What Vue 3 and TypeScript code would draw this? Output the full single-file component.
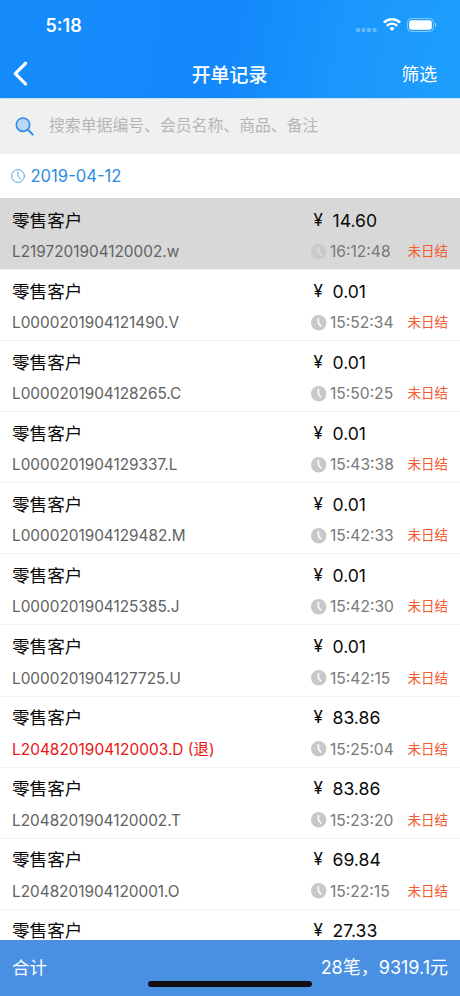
<script setup lang="ts">
interface Order {
  code?: string
  amount: string
  time?: string
  refunded?: boolean
  selected?: boolean
}

const orders: Order[] = [
  { code: 'L2197201904120002.w', amount: '14.60', time: '16:12:48', selected: true },
  { code: 'L0000201904121490.V', amount: '0.01', time: '15:52:34' },
  { code: 'L0000201904128265.C', amount: '0.01', time: '15:50:25' },
  { code: 'L0000201904129337.L', amount: '0.01', time: '15:43:38' },
  { code: 'L0000201904129482.M', amount: '0.01', time: '15:42:33' },
  { code: 'L0000201904125385.J', amount: '0.01', time: '15:42:30' },
  { code: 'L0000201904127725.U', amount: '0.01', time: '15:42:15' },
  { code: 'L2048201904120003.D (退)', amount: '83.86', time: '15:25:04', refunded: true },
  { code: 'L2048201904120002.T', amount: '83.86', time: '15:23:20' },
  { code: 'L2048201904120001.O', amount: '69.84', time: '15:22:15' },
  { amount: '27.33' },
]
</script>

<template>
  <div class="screen">
    <header class="header">
      <div class="status">
        <span class="clock">5:18</span>
        <div class="signals">
          <svg class="dots" width="21" height="4" viewBox="0 0 21 4">
            <rect v-for="n in 4" :key="n" :x="(n - 1) * 5.5" y="0" width="4" height="4" rx="1" fill="#fff" opacity=".32" />
          </svg>
          <svg class="wifi" width="18" height="13" viewBox="0 0 18 13" fill="none" stroke="#fff">
            <path d="M.9 4.6A11.5 11.5 0 0 1 17.1 4.6" stroke-width="2.5" />
            <path d="M3.8 7.9A7.2 7.2 0 0 1 14.2 7.9" stroke-width="2.3" />
            <path d="M6.4 10.2A3.8 3.8 0 0 1 11.6 10.2L9 12.9Z" fill="#fff" stroke="none" />
          </svg>
          <svg class="battery" width="30" height="14" viewBox="0 0 30 14">
            <rect x=".5" y=".5" width="26" height="13" rx="4" fill="none" stroke="#fff" stroke-opacity=".45" />
            <rect x="2.2" y="2.2" width="22.6" height="9.6" rx="2.4" fill="#fff" />
            <path d="M28 4.8C29.8 5.4 29.8 8.6 28 9.2Z" fill="#fff" opacity=".5" />
          </svg>
        </div>
      </div>
      <nav class="nav">
        <svg class="back" width="18" height="26" viewBox="0 0 18 26" fill="none" stroke="#fff" stroke-width="3.2" stroke-linecap="round" stroke-linejoin="round">
          <path d="M13.5 3.3L3.3 13.6L13.5 23.9" />
        </svg>
        <span class="title">开单记录</span>
        <span class="filter">筛选</span>
      </nav>
    </header>

    <div class="search">
      <svg width="19" height="19" viewBox="0 0 19 19" stroke="#2f8ee8" stroke-width="1.6" stroke-linecap="round">
        <circle cx="8" cy="7.7" r="6.7" fill="#b9d8f3" />
        <path d="M12.9 12.7L17.7 17.5" fill="none" stroke-width="2" />
      </svg>
      <span class="placeholder">搜索单据编号、会员名称、商品、备注</span>
    </div>

    <div class="date">
      <svg width="14" height="14" viewBox="0 0 14 14" fill="none" stroke="#55a5e6" stroke-linecap="round">
        <circle cx="7" cy="7" r="6.4" />
        <path d="M7 3V7.4L9.6 10.3" />
      </svg>
      <span class="day">2019-04-12</span>
    </div>

    <main class="list">
      <article v-for="(order, i) in orders" :key="i" class="row" :class="{ selected: order.selected, refunded: order.refunded }">
        <div class="left">
          <span class="name">零售客户</span>
          <span v-if="order.code" class="code">{{ order.code }}</span>
        </div>
        <div class="right">
          <div class="amount"><span class="yen">¥</span><span class="sum">{{ order.amount }}</span></div>
          <div v-if="order.time" class="meta">
            <svg width="16" height="16" viewBox="0 0 16 16">
              <circle class="dial" cx="7.7" cy="7.7" r="7.7" />
              <path class="hands" d="M7.4 3.5V8L9.8 11" fill="none" stroke-width="1.6" stroke-linecap="round" />
            </svg>
            <span class="time">{{ order.time }}</span>
            <span class="state">未日结</span>
          </div>
        </div>
      </article>
    </main>

    <footer class="footer">
      <span>合计</span>
      <span class="total">28笔，9319.1元</span>
      <i class="home"></i>
    </footer>
  </div>
</template>

<style>
body {
  margin: 0;
}
</style>

<style scoped>
.screen {
  width: 460px;
  height: 996px;
  display: flex;
  flex-direction: column;
  overflow: hidden;
  background: #fff;
  font-family: Inter, "Noto Sans CJK SC", sans-serif;
  white-space: nowrap;
}
.header {
  flex: none;
  height: 98px;
  box-sizing: border-box;
  background: linear-gradient(100deg, #168bfb 0%, #1388fb 50%, #1a96fc 73%, #1e9ffc 100%);
  color: #fff;
}
.status {
  height: 50px;
  display: flex;
  justify-content: space-between;
  padding: 0 23.5px 0 45.5px;
}
.clock {
  font-size: 18px;
  font-weight: 600;
  line-height: 52px;
}
.signals {
  display: flex;
  align-items: flex-start;
  padding-top: 18px;
}
.dots {
  margin: 10px 6px 0 0;
}
.wifi {
  margin-right: 6px;
}
.nav {
  height: 46px;
  display: grid;
  grid-template-columns: 1fr auto 1fr;
  align-items: center;
  padding: 0 23px 0 12px;
  box-sizing: border-box;
}
.title {
  font-size: 18.9px;
  font-weight: 500;
  margin-left: 10px;
}
.filter {
  font-size: 17.8px;
  text-align: right;
}
.search {
  flex: none;
  height: 55.5px;
  display: flex;
  align-items: center;
  padding-left: 15px;
  box-sizing: border-box;
  background: #f0f0f0;
  border-top: 1px solid #c4e6fd;
}
.placeholder {
  margin-left: 15px;
  font-size: 15.85px;
  line-height: 20px;
  color: #b5b5b9;
}
.date {
  flex: none;
  height: 44.5px;
  display: flex;
  align-items: center;
  padding-left: 11px;
  box-sizing: border-box;
}
.day {
  margin-left: 5.5px;
  font-size: 16.6px;
  color: #2b8be2;
}
.list {
  flex: 1;
  min-height: 0;
  overflow: hidden;
}
.row {
  height: 71.08px;
  display: flex;
  justify-content: space-between;
  box-sizing: border-box;
  padding: 7.6px 12px 0;
  border-top: 1px solid #f1f1f1;
}
.left,
.right {
  display: flex;
  flex-direction: column;
}
.right {
  width: 137px;
}
.name,
.amount {
  height: 27.5px;
  line-height: 27px;
  font-size: 17.6px;
  color: #0a0a0a;
}
.amount {
  display: flex;
  padding-left: 2px;
}
.yen {
  width: 19.5px;
  padding-left: 0.5px;
  box-sizing: border-box;
  font-size: 17px;
}
.code,
.meta {
  height: 35px;
  line-height: 35px;
  font-size: 15.35px;
  color: #626262;
}
.meta {
  display: flex;
  align-items: center;
  font-size: 15.6px;
  color: #797979;
}
.dial {
  fill: #c8c8ca;
}
.hands {
  stroke: #fff;
}
.time {
  margin-left: 3px;
}
.state {
  margin-left: auto;
  font-size: 13.5px;
  color: #f45b30;
}
.selected {
  background: #d8d8d8;
  border-color: #d8d8d8;
}
.selected .dial {
  fill: #c9cacb;
}
.selected .hands {
  stroke: #dedede;
}
.refunded .code {
  font-size: 15.45px;
  color: #ea1515;
}
.footer {
  flex: none;
  position: relative;
  height: 56px;
  display: flex;
  align-items: center;
  justify-content: space-between;
  box-sizing: border-box;
  padding: 0 12px;
  line-height: 26px;
  font-size: 17.5px;
  color: #fff;
  background: #4990e2;
}
.total {
  font-size: 18px;
}
.home {
  position: absolute;
  left: 148px;
  bottom: 9px;
  width: 164px;
  height: 6px;
  border-radius: 3px;
  background: #101010;
}
</style>
